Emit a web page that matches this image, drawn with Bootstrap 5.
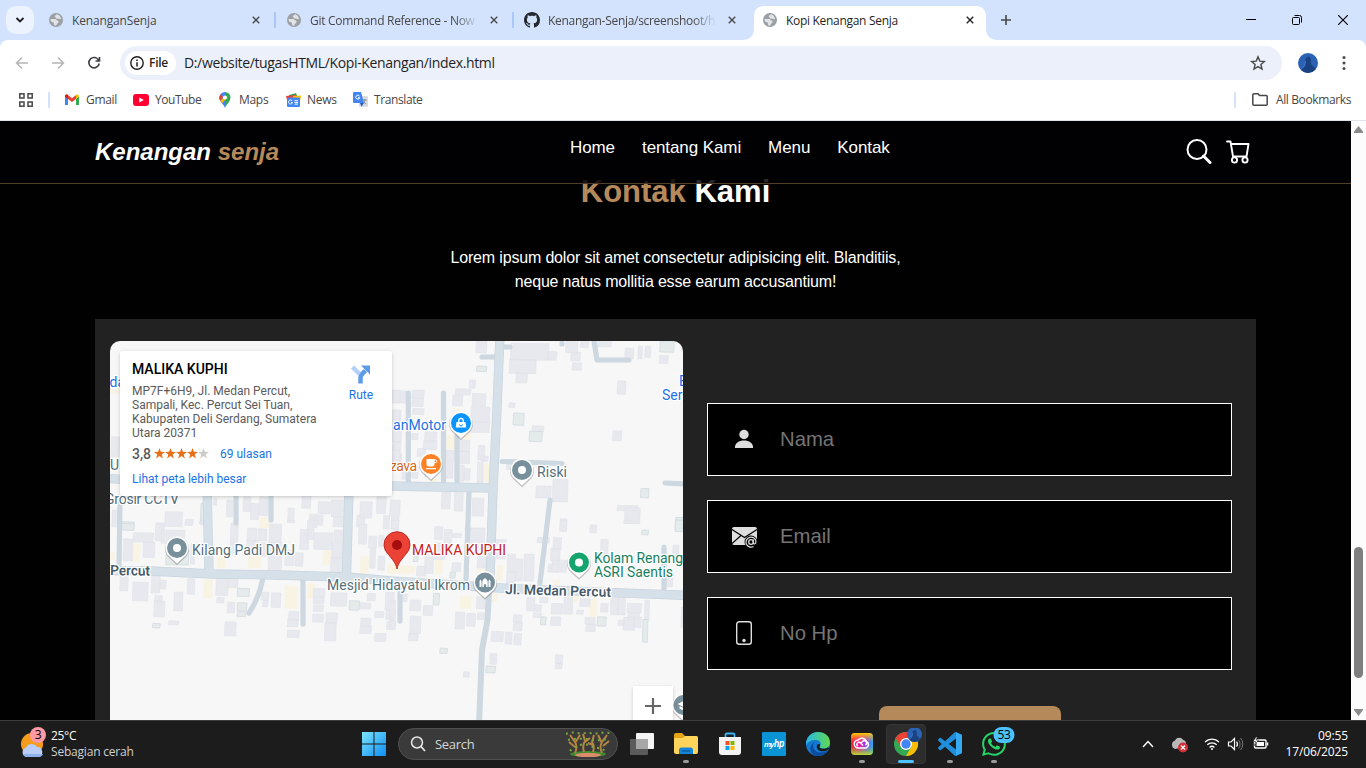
<!DOCTYPE html>
<html lang="id">
<head>
<meta charset="utf-8">
<meta name="viewport" content="width=device-width, initial-scale=1">
<title>Kopi Kenangan Senja</title>
<link href="https://cdn.jsdelivr.net/npm/bootstrap@5.3.0/dist/css/bootstrap.min.css" rel="stylesheet">
<style>
html,body{height:768px;overflow:hidden}
body{font-family:"Open Sans","Noto Sans",sans-serif;font-size:12px;line-height:16px;letter-spacing:-.3px;color:#1f1f1f;background:#fff}
svg{display:block;flex:none}
/* browser chrome */
.tabstrip{height:40px;background:#d3e3fd;padding-left:6px}
.tab-search{width:28px;height:28px;border-radius:10px;background:#ecf2fe;margin-right:3px}
.btab{width:238px;height:40px;padding-left:12px;color:#474747;position:relative}
.btab .ttl{width:168px;margin-left:9px;padding-top:1px;white-space:nowrap;overflow:hidden;position:relative}
.btab .fade-end{-webkit-mask-image:linear-gradient(90deg,#000 145px,transparent 168px)}
.btab .cls{margin-left:10px}
.btab.sep::after{content:"";position:absolute;right:-1px;top:12px;width:2px;height:16px;background:#a8c7fa}
.btab.on{color:#1f1f1f}
.btab .shape{position:absolute;left:-9px;top:6px}
.btab.on>*:not(.shape){position:relative}
.toolbar-row{height:46px;border-radius:8px 8px 0 0;background:#fff}
.omnibox{width:1162px;height:34px;border-radius:17px;background:#ecf0fa;margin-left:18px;padding-left:5px}
.filechip{width:51px;height:24px;border-radius:12px;background:#fff;font-weight:600;letter-spacing:-.25px;gap:5px;padding-left:5px}
.url{font-size:14px;letter-spacing:-.36px;margin-left:8px}
.bm-row{height:35px;color:#474747;border-bottom:1px solid #dfe3e8;padding-bottom:7px}
.bm-row .bm{gap:6px}
.vsep{width:2px;height:16px;background:#d3e3fd}
/* page */
.viewport{height:599px}
.site{width:1351px;background:#010101;position:relative;overflow:hidden;font-family:"Liberation Sans",Arial,sans-serif;letter-spacing:0;color:#fff}
.site-nav{position:absolute;inset:0 0 auto 0;height:63px;background:rgba(1,1,3,.85);border-bottom:1px solid #513d29;padding:0 95px}
.brand{font-size:24px;font-weight:700;font-style:italic;line-height:28px;width:475px;margin-top:-1px}
.coffee{color:#b6895b}
.site-nav .links{gap:27px;font-size:17px;letter-spacing:-.09px;line-height:20px;margin-top:-9px}
.head{font-size:31px;font-weight:700;line-height:36px;padding-top:53px;margin:0;text-align:center}
.lead-txt{font-size:16px;letter-spacing:-.17px;line-height:24px;margin:36px auto 0;width:480px;text-align:center}
.panel{margin:25px 95px 0;height:401px;background:#222;padding:22px 24px 0 15px;gap:24px}
.map-box{width:573px;height:379px;border-radius:10px 10px 0 0;overflow:hidden;position:relative;background:#f7f7f7;font-family:Roboto,sans-serif}
.place{position:absolute;left:10px;top:10px;width:272px;height:145px;background:#fff;border-radius:2px;box-shadow:0 1px 4px -1px rgba(0,0,0,.3);padding:10px 12px;color:#5b5b5b;font-size:12px;line-height:14px}
.place .nm{font-size:14px;font-weight:500;color:#000;line-height:16px;margin-bottom:7px}
.place .lnk{color:#1a73e8}
.zoombtn{position:absolute;left:523px;top:345px;width:40px;height:40px;background:#fff;box-shadow:0 1px 4px -1px rgba(0,0,0,.3)}
.fld{height:73px;border:1px solid #fff;background:#000;color:#757575;font-size:20.3px;margin-bottom:24px;padding:0 0 2px 24px;gap:24px}
.fld svg{margin-top:1px}
.send{width:182px;height:40px;border-radius:8px;background:#b6895b;margin:36px auto 0}
.sbar{width:15px;background:#fcfcfc;padding:8px 0 4px}
.thumb{width:9px;height:131px;border-radius:5px;background:#7f7f7f;margin-top:409px}
/* taskbar */
.taskbar{height:48px;background:#1c1c1c;border-top:1px solid #3c3c3c;color:#fff;padding-bottom:1px}
.taskbar .slot{width:44px;height:47px;position:relative}
.slot .run{position:absolute;left:19px;top:39px;width:6px;height:3px;border-radius:2px;background:#9a9a9a}
.slot .run.act{left:14px;width:16px;background:#4cc2ff}
.pill{width:220px;height:32px;border-radius:16px;background:#3a3a3a;border:1px solid #505050;margin-left:12px;padding-left:11px}
.tile{position:absolute;left:2px;top:3px;width:40px;height:40px;border-radius:4px;background:#2d2d2d;border:1px solid #353535}
.slot svg{position:relative}
</style>
</head>
<body class="d-flex flex-column">
<svg width="0" height="0" class="position-absolute">
 <symbol id="globe" viewBox="0 0 14 14"><circle cx="7" cy="7" r="7" fill="#9aa0a6"/><path d="M8.200 1.200c-1 .9-2.500.9-2.500 2.200 0 1 1.600.7 1.600 1.800 0 .8-1.100.8-1.900.8H1.700c-.5 1.500.3 2.700 1.300 2.900 1.100.2 1.800.2 1.900 1.400.1.900.1 1.900.9 2.300 2 .5 1.800-1.100 2.300-1.900.6-.8 1.500-.8 1.500-2 0-1.500-1.600-1-2.300-1.700-.5-.7.200-1.400 1.100-1.400.9 0 1.300.7 2.200.7.900 0 1.300-.4 1.400-.6-.3-2-1.600-3.700-3.800-4.500z" fill="#fff" opacity=".7"/></symbol>
 <symbol id="x" viewBox="0 0 14 14"><path d="M3.200 3.200l7.600 7.600M10.800 3.200l-7.600 7.600" stroke="currentColor" stroke-width="1.600" fill="none"/></symbol>
 <symbol id="face" viewBox="0 0 20 20"><circle cx="10" cy="10" r="10" fill="#2c62b4"/><path d="M3.500 17.500c.5-3 3-3 3.500-5 .4-2-.6-4 .5-6.500C8.500 3.800 11.500 3 12.500 5c.8 2 0 4 .5 6 1 2 4 3 4.500 5.500a10 10 0 0 1-14 1z" fill="#1b4280"/><path d="M7.500 8c0 4-2 6-3 7" stroke="#3f7bd6" fill="none"/></symbol>
</svg>

<div class="tabstrip d-flex align-items-center">
 <div class="tab-search d-flex align-items-center justify-content-center"><svg width="10" height="8" viewBox="0 0 10 8"><path d="M1.500 2L5 5.500 8.500 2" fill="none" stroke="#1f1f1f" stroke-width="1.800"/></svg></div>
 <div class="btab sep d-flex align-items-center"><svg width="14" height="14"><use href="#globe"/></svg><span class="ttl" style="letter-spacing:-.15px">KenanganSenja</span><svg class="cls" width="12" height="12"><use href="#x"/></svg></div>
 <div class="btab sep d-flex align-items-center"><svg width="14" height="14"><use href="#globe"/></svg><span class="ttl fade-end">Git Command Reference - Now</span><svg class="cls" width="12" height="12"><use href="#x"/></svg></div>
 <div class="btab d-flex align-items-center"><svg width="16" height="16" viewBox="0 0 16 16" style="margin:0 -1px"><path fill="#24292f" d="M8 0C3.580 0 0 3.580 0 8c0 3.540 2.290 6.530 5.470 7.590.4.070.55-.17.55-.38 0-.19-.01-.82-.01-1.490-2.010.37-2.530-.49-2.690-.94-.09-.23-.48-.94-.82-1.130-.28-.15-.68-.52-.01-.53.63-.01 1.080.58 1.230.82.72 1.210 1.870.87 2.330.66.070-.52.28-.87.51-1.070-1.780-.2-3.640-.89-3.640-3.950 0-.87.31-1.590.82-2.150-.08-.2-.36-1.020.080-2.120 0 0 .67-.21 2.200.82.64-.18 1.320-.27 2-.27.68 0 1.360.090 2 .27 1.530-1.040 2.200-.82 2.200-.82.44 1.100.16 1.920.080 2.120.51.56.82 1.270.82 2.150 0 3.070-1.870 3.750-3.650 3.950.29.25.54.73.54 1.480 0 1.070-.01 1.930-.01 2.200 0 .21.15.46.55.38A8.012 8.012 0 0 0 16 8c0-4.420-3.580-8-8-8z"/></svg><span class="ttl fade-end">Kenangan-Senja/screenshoot/h</span><svg class="cls" width="12" height="12"><use href="#x"/></svg></div>
 <div class="btab on d-flex align-items-center"><svg class="shape" width="256" height="34" viewBox="0 0 256 34"><path d="M0 34c8 0 12-4 12-12V10C12 4 16 0 22 0h212c6 0 10 4 10 10v12c0 8 4 12 12 12z" fill="#fff"/></svg><svg width="14" height="14"><use href="#globe"/></svg><span class="ttl">Kopi Kenangan Senja</span><svg class="cls" width="12" height="12"><use href="#x"/></svg></div>
 <svg width="12" height="12" viewBox="0 0 12 12" style="margin-left:11px"><path d="M6 1v10M1 6h10" stroke="#474747" stroke-width="1.600"/></svg>
 <div class="d-flex align-items-center ms-auto" style="gap:36px;margin-right:18px">
  <svg width="10" height="10"><path d="M0 4.500h10" stroke="#000"/></svg>
  <svg width="10" height="10" viewBox="0 0 10 10" fill="none" stroke="#000"><rect x=".5" y="2.500" width="7" height="7" rx="1"/><path d="M2.500 .5h5a2 2 0 0 1 2 2V7.500"/></svg>
  <svg width="10" height="10"><path d="M0 0l10 10M10 0L0 10" stroke="#000" stroke-width="1.100"/></svg>
 </div>
</div>

<div style="background:#d3e3fd"><div class="toolbar-row d-flex align-items-center">
 <svg width="88" height="16" viewBox="0 0 88 16" style="margin-left:14px" fill="none" stroke-width="1.500"><path d="M14 8H2.500M8 2.500L2.500 8 8 13.500M38 8h11.500M44 2.500L49.500 8 44 13.500" stroke="#b4b5b7"/><path d="M84.800 5.500A5.200 5.200 0 1 0 85.200 8.500M85.500 2v4h-4" stroke="#3c3f43" stroke-width="1.600"/></svg>
 <div class="omnibox d-flex align-items-center">
  <div class="filechip d-flex align-items-center"><svg width="14" height="14" viewBox="0 0 14 14"><circle cx="7" cy="7" r="6.200" fill="none" stroke="#1f1f1f" stroke-width="1.400"/><path d="M7 6.200v4.200M7 3.500v1.500" stroke="#1f1f1f" stroke-width="1.500"/></svg>File</div>
  <span class="url">D:/website/tugasHTML/Kopi-Kenangan/index.html</span>
  <svg class="ms-auto me-3" width="16" height="16" viewBox="0 0 16 16"><path d="M8 1.800l1.800 4.300 4.600.4-3.500 3 1.100 4.500L8 11.600 4 14l1.100-4.500-3.500-3 4.600-.4z" fill="none" stroke="#474747" stroke-width="1.400"/></svg>
 </div>
 <svg width="20" height="20" style="margin-left:16px"><use href="#face"/></svg>
 <svg width="4" height="16" viewBox="0 0 4 16" style="margin-left:24px" fill="#474747"><circle cx="2" cy="2.500" r="1.500"/><circle cx="2" cy="8" r="1.500"/><circle cx="2" cy="13.500" r="1.500"/></svg>
</div></div>

<div class="bm-row d-flex align-items-center">
 <svg width="14" height="14" viewBox="0 0 14 14" style="margin-left:19px" fill="none" stroke="#474747" stroke-width="1.500"><rect x=".8" y=".8" width="4.200" height="4.200"/><rect x="9" y=".8" width="4.200" height="4.200"/><rect x=".8" y="9" width="4.200" height="4.200"/><rect x="9" y="9" width="4.200" height="4.200"/></svg>
 <div class="vsep" style="margin-left:15px"></div>
 <div class="bm d-flex align-items-center" style="margin-left:14px;width:69px"><svg width="16" height="12" viewBox="0 0 16 12"><path d="M1 2v9h3V5z" fill="#4285f4"/><path d="M15 2v9h-3V5z" fill="#34a853"/><path d="M1 3V2C1 .5 2.500 0 3.600.8L8 4.300 12.400.8 12 5 8 8 4 5z" fill="#ea4335"/><path d="M1 2.500L4 5V1C2.500 0 1 .6 1 2.500z" fill="#c5221f"/><path d="M15 2.500L12 5V1c1.500-1 3-.4 3 1.500z" fill="#fbbc04"/></svg>Gmail</div>
 <div class="bm d-flex align-items-center" style="width:84px;letter-spacing:-.45px"><svg width="16" height="12" viewBox="0 0 16 12"><rect width="16" height="12" rx="3" fill="#f03"/><path d="M6.300 3.400v5.200L10.800 6z" fill="#fff"/></svg>YouTube</div>
 <div class="bm d-flex align-items-center" style="width:69px"><svg width="16" height="16" viewBox="0 0 16 16"><path d="M8 16C7 12.500 2.500 10 2.500 5.500A5.500 5.500 0 0 1 8 0z" fill="#4285f4"/><path d="M8 0a5.500 5.500 0 0 1 5.500 5.500C13.500 10 9 12.500 8 16z" fill="#34a853"/><path d="M3.300 9L7 5l2 2-4.200 4.500z" fill="#fbbc04"/><path d="M3.500 2.500l2.800 2.400L3 8.500A5 5 0 0 1 3.500 2.500z" fill="#ea4335"/><circle cx="8" cy="5.500" r="2.100" fill="#fff"/></svg>Maps</div>
 <div class="bm d-flex align-items-center" style="width:67px"><svg width="15" height="14" viewBox="0 0 15 14"><path d="M3 2l7-2 1.500 4H3z" fill="#34a853"/><path d="M0 3l9-1 1 5H1z" fill="#ea4335"/><path d="M7 3l8-.5-.5 4H7z" fill="#fbbc04"/><rect x="1" y="4.500" width="13" height="9.500" rx="1.200" fill="#4285f4"/><path d="M6.300 8A2 2 0 1 0 6.500 9.500H5M8.500 7.700h3.500M8.500 9.400h3.500M8.500 11.100h3.500" stroke="#fff" fill="none"/></svg>News</div>
 <div class="bm d-flex align-items-center" style="letter-spacing:-.4px"><svg width="15" height="15" viewBox="0 0 15 15"><rect x="6" y="4" width="9" height="11" rx="1" fill="#dadce0"/><path d="M1 0h7l3 11H1a1 1 0 0 1-1-1V1a1 1 0 0 1 1-1z" fill="#4285f4"/><path d="M7 11h4l-2.500 3.500z" fill="#1a56c4"/><path d="M6.500 4A2 2 0 1 0 6.800 5.700H5" stroke="#fff" fill="none"/><path d="M9.800 8h4M11.800 7v1c0 2-1 3.500-2 4M10.500 9.500c.5 1.200 1.500 2 2.800 2.700" stroke="#80868b" fill="none" stroke-width=".9"/></svg>Translate</div>
 <div class="vsep ms-auto"></div>
 <div class="d-flex align-items-center" style="margin-left:16px;gap:8px;margin-right:15px;letter-spacing:-.38px"><svg width="16" height="13" viewBox="0 0 16 13"><path d="M.8 10.700V2c0-.7.4-1.200 1.200-1.200h4L7.500 2.500h6.700c.6 0 1 .4 1 1v7.700c0 .6-.4 1-1 1H1.800c-.6 0-1-.5-1-1.500z" fill="none" stroke="#474747" stroke-width="1.500"/></svg>All Bookmarks</div>
</div>

<div class="viewport d-flex">
 <main class="site">
  <h2 class="head"><span class="coffee">Kontak</span> Kami</h2>
  <p class="lead-txt">Lorem ipsum dolor sit amet consectetur adipisicing elit. Blanditiis,<br>neque natus mollitia esse earum accusantium!</p>
  <section class="panel d-flex">
   <div class="map-box flex-shrink-0">
    <svg id="map" width="573" height="379" viewBox="110 341 573 379">
     <g id="blocks"></g>
     <g fill="none" stroke="#cdd8e1" stroke-linecap="round" stroke-linejoin="round">
      <g stroke-width="5.200"><path d="M443.500 393V484M408.300 393V484M457 436V485M469 492L466 580M550 500L540 583M482 357h14M504 347h6M562 343v1M594 341l3 19h32M502 461.500l60 2M665 483l20 1M236 490v33M271 490v30M262.500 580q-4 19-13.500 33M303 580v44M400 585v36M664 547v42M120 500l-1 68"/></g>
      <path d="M490 573L487.500 620 482 650 479 725" stroke-width="6"/>
     </g>
     <path d="M100 570.500L150 571 213 574 277 575 347 577 390 581 500 588 613 592.700 690 595.500M100 478L200 484 390 486 492 488M500 335L496.500 420 493 490 490 577M207 487l2 85M349 490l-2.500 85" stroke="#c8d4df" fill="none" stroke-linejoin="round" stroke-width="9.300"/>
     <path d="M100 570.500L150 571 213 574 277 575 347 577 390 581 500 588 613 592.700 690 595.500M100 478L200 484 390 486 492 488M500 335L496.500 420 493 490 490 577M207 487l2 85M349 490l-2.500 85" stroke="#d6e0e8" fill="none" stroke-width="8"/>
     <g id="pins"></g>
     <g font-family="Roboto,sans-serif" font-size="14" paint-order="stroke" stroke="#fff" stroke-width="2.500" stroke-linejoin="round" fill="#546e7a">
      <text x="109.500" y="387" fill="#1a73e8">da</text>
      <text x="110" y="470" fill="#546e7a">U</text>
      <text x="105" y="504" textLength="74">Grosir CCTV</text>
      <text x="393" y="430" textLength="53" fill="#1a73e8">anMotor</text>
      <text x="390" y="471" textLength="27" fill="#d56518">zava</text>
      <text x="537" y="477" textLength="30">Riski</text>
      <text x="679" y="386" fill="#1a73e8">B</text>
      <text x="662" y="400" fill="#1a73e8">Ser</text>
      <text x="192" y="555" textLength="103">Kilang Padi DMJ</text>
      <text x="327" y="590" textLength="143">Mesjid Hidayatul Ikrom</text>
      <text x="412" y="555" textLength="94" fill="#c5221f">MALIKA KUPHI</text>
      <text x="594" y="563" textLength="89" fill="#178060">Kolam Renang</text>
      <text x="594" y="577" textLength="79" fill="#178060">ASRI Saentis</text>
      <g font-weight="600" fill="#455a6b"><text x="110" y="575" textLength="40" transform="rotate(1 110 575)">Percut</text>
      <text x="505" y="594" textLength="106" transform="rotate(1.500 505 594)">Jl. Medan Percut</text></g>
     </g>
     <path d="M397 569c-1.500-7-5-9.500-8.500-14.500A13 13 0 1 1 405.500 554.500C402 559.500 398.500 562 397 569z" fill="#ea4335" stroke="#b31412" stroke-width=".8"/><circle cx="397" cy="545" r="5" fill="#a50e0e"/>
    </svg>
    <div class="place">
     <div class="nm">MALIKA KUPHI</div>
     <div>MP7F+6H9, Jl. Medan Percut,<br>Sampali, Kec. Percut Sei Tuan,<br>Kabupaten Deli Serdang, Sumatera<br>Utara 20371</div>
     <div class="d-flex align-items-center" style="margin-top:6px"><span style="font-size:14px;width:22px;font-weight:500">3,8</span>
      <svg width="56" height="11" viewBox="0 0 56 11"><defs><path id="st" d="M5.500 0l1.400 3.800 4.100.1-3.300 2.500 1.200 4L5.500 8.100 2.100 10.400l1.200-4L0 3.900l4.100-.1z"/></defs><g fill="#e7711b"><use href="#st"/><use href="#st" x="11"/><use href="#st" x="22"/><use href="#st" x="33"/></g><use href="#st" x="44" fill="#ccc"/></svg>
      <span class="lnk" style="margin-left:10px;padding-top:1px">69 ulasan</span></div>
     <div class="lnk" style="margin-top:11px">Lihat peta lebih besar</div>
     <div class="position-absolute lnk text-center" style="left:221px;top:14px;width:40px"><svg class="mx-auto" width="20" height="19" viewBox="0 0 20 19"><path d="M1.500 2l7.500 7.500" stroke="#b3d1f8" stroke-width="4.500"/><path d="M9.500 18.500V13c0-3 2-4.500 5-7.500" fill="none" stroke="#5c9be8" stroke-width="4.500"/><path d="M10 0.500h9v9z" fill="#5c9be8"/></svg><div style="margin-top:4px">Rute</div></div>
    </div>
    <div class="zoombtn d-flex align-items-center justify-content-center"><svg width="18" height="18"><path d="M9 1v16M1 9h16" stroke="#666" stroke-width="2.200"/></svg></div>
   </div>
   <form class="flex-grow-1" style="padding-top:62px">
    <div class="fld d-flex align-items-center"><svg width="24" height="24" viewBox="0 0 24 24" fill="#dedede"><circle cx="12" cy="7.500" r="4.700"/><path d="M3 21c-.5-5 4-7.500 9-7.500s9.500 2.500 9 7.500z"/></svg>Nama</div>
    <div class="fld d-flex align-items-center"><svg width="26" height="24" viewBox="0 0 26 24" style="margin-right:-2px"><rect y="3" width="25" height="18" rx="2" fill="#dedede"/><path d="M0 5.500l12.500 8L25 5.500M0 19.500L9 11.500M25 19l-8-7" stroke="#000" stroke-width="1.200" fill="none"/><circle cx="19" cy="18" r="6.500" fill="#000"/><circle cx="19" cy="18" r="2.300" fill="none" stroke="#dedede" stroke-width="1.300"/><path d="M21.300 15.500v3.200c0 2 2.700 1.500 2.700-1A5 5 0 1 0 21.500 22.500" fill="none" stroke="#dedede" stroke-width="1.200"/></svg>Email</div>
    <div class="fld d-flex align-items-center mb-0"><svg width="24" height="24" viewBox="0 0 24 24"><rect x="4.700" y=".7" width="14.600" height="22.600" rx="2.500" fill="none" stroke="#dedede" stroke-width="1.400"/><circle cx="12" cy="19.500" r="1.700" fill="#dedede"/></svg>No Hp</div>
    <div class="send"></div>
   </form>
  </section>
  <nav class="site-nav d-flex align-items-center">
   <div class="brand">Kenangan <span class="coffee">senja</span></div>
   <div class="links d-flex"><span>Home</span><span>tentang Kami</span><span>Menu</span><span>Kontak</span></div>
   <div class="ms-auto d-flex align-items-center" style="gap:14px;margin-right:5px;margin-top:-1px">
    <svg width="26" height="26" viewBox="0 0 26 26" fill="none" stroke="#fff"><circle cx="11" cy="10.500" r="9.500" stroke-width="2"/><path d="M17.500 17l6.500 6.500" stroke-width="3" stroke-linecap="round"/></svg>
    <svg width="25" height="25" viewBox="0 0 25 25" fill="none" stroke="#fff" stroke-width="1.900"><path d="M1 2.500h3.500L7 17.500h13.500L22.500 5H5" stroke-linejoin="round" stroke-linecap="round"/><circle cx="8.500" cy="21" r="2.600"/><circle cx="19" cy="21" r="2.600"/></svg>
   </div>
  </nav>
 </main>
 <div class="sbar d-flex flex-column align-items-center justify-content-between flex-shrink-0">
  <svg width="9" height="7" style="margin-top:-3px"><path d="M4.500 0L9 5.500V7H0V5.500z" fill="#8b8b8b"/></svg>
  <div class="thumb"></div>
  <svg width="9" height="7" style="margin-top:26px"><path d="M0 0h9v1L4.500 7 0 1z" fill="#8b8b8b"/></svg>
 </div>
</div>

<footer class="taskbar d-flex align-items-center">
 <svg width="28" height="34" viewBox="0 0 28 34" style="margin:-3px 0 0 20px"><circle cx="12" cy="18" r="11" fill="#f59c1c"/><path d="M6 31a5 5 0 0 1 0-9.500C8 17 15 17 17 21c5-1 8 8 2 10z" fill="#b9cdf6"/><path d="M6 31a5 5 0 0 1-3-3h20c-1 2-2 3-4 3z" fill="#8fb2ee"/><circle cx="18" cy="9" r="8" fill="#ff99a4"/><text x="18" y="13.300" text-anchor="middle" font-size="12" font-family="Open Sans">3</text></svg>
 <div style="margin-left:3px;line-height:16px;width:309px">25°C<br><span style="color:#d0d0d0;letter-spacing:-.2px">Sebagian cerah</span></div>
 <svg width="24" height="24" viewBox="0 0 24 24" style="margin-left:2px"><defs><linearGradient id="w" x2="1" y2="1"><stop stop-color="#7be5fd"/><stop offset="1" stop-color="#0f8df2"/></linearGradient></defs><path d="M0 0h11.500v11.500H0zM12.500 0H24v11.500H12.500zM0 12.500h11.500V24H0zM12.500 12.500H24V24H12.500z" fill="url(#w)"/></svg>
 <div class="pill d-flex align-items-center" style="color:#d6d6d6;font-size:13px"><svg width="16" height="16" viewBox="0 0 16 16"><circle cx="7" cy="6.500" r="5.500" fill="#4a4a4a" stroke="#e6e6e6" stroke-width="1.500"/><path d="M11 10.500l4 4.500" stroke="#e6e6e6" stroke-width="1.800"/></svg><span style="margin-left:9px">Search</span>
  <svg class="ms-auto" width="45" height="26" viewBox="0 0 45 26" style="margin-right:6px"><ellipse cx="22" cy="23" rx="18" ry="3" fill="#3f8a2c"/><ellipse cx="22" cy="24" rx="13" ry="2.200" fill="#d98d6a"/><g fill="none" stroke="#b58442" stroke-width="2"><path d="M9 22q3-6 0-11L4 4M9 12l5-8M9 16l-6-5M18 21q-2-6 1-11l-2-7M19 11l5-4M27 21q2-6-1-10l2-7M27 14l-5-2M36 22q-3-6 0-11l5-7M36 12l-4-8M37 15l6-5"/></g><g fill="none" stroke="#7ba83a" stroke-width="2" stroke-dasharray="2 4"><path d="M0 3q6-3 15 0 7-2 13 0 8-2 16-1M2 9q9-2 19-1 12 3 22-1M4 20q3-4 8-4M31 17q5 0 9 4M14 14q8-2 14 3"/></g></svg></div>
 <div class="d-flex" style="margin-left:2px">
  <div class="slot d-flex align-items-center justify-content-center"><svg width="24" height="24" viewBox="0 0 24 24"><rect x="6" y="1" width="18" height="16" rx="1" fill="#f4f4f4"/><rect y="7" width="18" height="16" rx="1" fill="#666" opacity=".85"/><rect x="6" y="7" width="12" height="10" fill="#a7a7a7"/></svg></div>
  <div class="slot d-flex align-items-center justify-content-center"><svg width="24" height="22" viewBox="0 0 24 22"><path d="M0 2q0-2 2-2h6l3 3h11q2 0 2 2v6H0z" fill="#e6a314"/><path d="M0 5h9l2-2h11q2 0 2 2v14q0 2-2 2H2q-2 0-2-2z" fill="#ffd45b"/><path d="M5 21v-4q0-2.500 2.500-2.500h9Q19 14.500 19 17v4z" fill="#1384d8"/><path d="M8 18h8" stroke="#0b5ea8" stroke-width="1.500"/></svg><i class="run"></i></div>
  <div class="slot d-flex align-items-center justify-content-center"><svg width="24" height="24" viewBox="0 0 24 24"><path d="M7.500 6V3q0-1.500 1.500-1.500h6q1.500 0 1.500 1.500v3" fill="none" stroke="#35b5f1" stroke-width="1.800"/><path d="M1 5h22v15q0 3-3 3H4q-3 0-3-3z" fill="#f3f3f3"/><path d="M7.500 9h4v4h-4z" fill="#f25022"/><path d="M12.500 9h4v4h-4z" fill="#7fba00"/><path d="M7.500 14h4v4h-4z" fill="#00a4ef"/><path d="M12.500 14h4v4h-4z" fill="#ffb900"/></svg></div>
  <div class="slot d-flex align-items-center justify-content-center"><svg width="24" height="24"><rect width="24" height="24" rx="1" fill="#0a94d6"/><text x="2" y="15" font-family="Liberation Sans" font-style="italic" font-weight="700" fill="#fff" font-size="8" textLength="10">my</text><text x="12" y="15" font-family="Liberation Sans" font-style="italic" font-weight="700" fill="#fff" font-size="11" textLength="10" lengthAdjust="spacingAndGlyphs">hp</text></svg></div>
  <div class="slot d-flex align-items-center justify-content-center"><svg width="24" height="24" viewBox="0 0 24 24"><defs><linearGradient id="e1" x2="1"><stop stop-color="#25b7e8"/><stop offset="1" stop-color="#62d94f"/></linearGradient></defs><circle cx="12" cy="12" r="12" fill="#1479d0"/><path d="M0 11C1 4 6 0 12 0c7 0 12 4.500 12 10.500 0 4-3 6-6.500 6-2.500 0-4-1-3.500-2.300 1.500-1.700 1-6-4-6.200C5 8 1.500 10 0 13z" fill="url(#e1)"/><path d="M9 10c-3.500 3-2 8.500 3 10 4 1.200 8 .3 10.500-2C20 22 16 24 12 24 6 24 3 18 5 14c1-2 2.500-3.500 4-4z" fill="#0b4c9e"/><path d="M13.500 12c1.300 2.500-.8 3 .5 4 2 1.200 6 .9 8-.8l1.500 1.300q-3 3-7.500 2.800c-4.500-.3-6.500-4-4.500-7z" fill="#1c1c1c"/></svg></div>
  <div class="slot d-flex align-items-center justify-content-center"><svg width="22" height="22" viewBox="0 0 22 22"><defs><linearGradient id="c1" x2="1" y2="0"><stop stop-color="#f22"/><stop offset=".35" stop-color="#f0a"/><stop offset=".7" stop-color="#84f"/><stop offset="1" stop-color="#2af"/></linearGradient><linearGradient id="c2" y1="0" x2="0" y2="1"><stop stop-color="#ffd000"/><stop offset=".45" stop-color="#f81" stop-opacity="0"/><stop offset=".6" stop-color="#6c3" stop-opacity=".1"/><stop offset="1" stop-color="#bd3"/></linearGradient></defs><rect width="22" height="22" rx="4" fill="url(#c1)"/><rect width="22" height="22" rx="4" fill="url(#c2)"/><path d="M7.500 15a4 4 0 0 1-.5-8 5 5 0 0 1 8.500 1.500A3.500 3.500 0 0 1 15 15zM12 12.500L9 9.500a2 2 0 1 0-2 3.500M10 10l2-2a2 2 0 1 1 2.500 4" fill="none" stroke="#fff" stroke-width="1.500"/></svg><i class="run"></i></div>
  <div class="slot d-flex align-items-center justify-content-center"><div class="tile"></div><svg width="32" height="32" viewBox="-4 -4 32 32"><circle cx="12" cy="12" r="12" fill="#34a853"/><path d="M12 12V6h10.400A12 12 0 0 1 12 24l5.200-9z" fill="#fbbc04"/><path d="M1.600 6l5.200 9L12 12V6h10.400A12 12 0 0 0 1.600 6z" fill="#ea4335"/><circle cx="12" cy="12" r="6" fill="#fff"/><circle cx="12" cy="12" r="4.700" fill="#4285f4"/><svg x="13" y="-5" width="15" height="15" overflow="visible"><use href="#face" width="15" height="15"/></svg></svg><i class="run act"></i></div>
  <div class="slot d-flex align-items-center justify-content-center"><svg width="24" height="24" viewBox="0 0 24 24"><path fill="#1f8fdc" d="M23.150 2.587L18.210.21a1.494 1.494 0 0 0-1.705.29l-9.460 8.630-4.120-3.128a.999.999 0 0 0-1.276.057L.327 7.261A1 1 0 0 0 .326 8.740L3.899 12 .326 15.260a1 1 0 0 0 .001 1.479L1.650 17.940a.999.999 0 0 0 1.276.057l4.120-3.128 9.460 8.630a1.492 1.492 0 0 0 1.704.29l4.942-2.377A1.500 1.500 0 0 0 24 20.060V3.939a1.500 1.500 0 0 0-.85-1.352zm-5.146 14.861L10.826 12l7.178-5.448v10.896z"/><path d="M18 .2l5.150 2.387A1.500 1.500 0 0 1 24 3.940V20.060a1.500 1.500 0 0 1-.85 1.350L18 23.800z" fill="#35a9f2"/></svg><i class="run"></i></div>
  <div class="slot d-flex align-items-center justify-content-center"><svg width="44" height="40" viewBox="0 0 44 40"><g transform="translate(10 8) scale(1.500)"><path fill="#25d366" d="M13.601 2.326A7.854 7.854 0 0 0 7.994 0C3.627 0 .068 3.558.064 7.926c0 1.399.366 2.760 1.057 3.965L0 16l4.204-1.102a7.933 7.933 0 0 0 3.790.965h.004c4.368 0 7.926-3.558 7.930-7.930A7.898 7.898 0 0 0 13.600 2.326zM7.994 14.521a6.573 6.573 0 0 1-3.356-.92l-.24-.144-2.494.654.666-2.433-.156-.251a6.560 6.560 0 0 1-1.007-3.505c0-3.626 2.957-6.584 6.591-6.584a6.560 6.560 0 0 1 4.660 1.931 6.557 6.557 0 0 1 1.928 4.660c-.004 3.639-2.961 6.592-6.592 6.592zm3.615-4.934c-.197-.099-1.170-.578-1.353-.646-.182-.065-.315-.099-.445.099-.133.197-.513.646-.627.775-.114.133-.232.148-.43.050-.197-.1-.836-.308-1.592-.985-.59-.525-.985-1.175-1.103-1.372-.114-.198-.011-.304.088-.403.087-.088.197-.232.296-.346.1-.114.133-.198.198-.33.065-.134.034-.248-.015-.347-.05-.099-.445-1.076-.612-1.470-.16-.389-.323-.335-.445-.34-.114-.007-.247-.007-.38-.007a.729.729 0 0 0-.529.247c-.182.198-.691.677-.691 1.654 0 .977.71 1.916.81 2.049.098.133 1.394 2.132 3.383 2.992.47.205.84.326 1.129.418.475.152.904.129 1.246.080.38-.058 1.171-.48 1.338-.943.164-.464.164-.86.114-.943-.049-.084-.182-.133-.38-.232z"/></g><rect x="21.500" y="3" width="21" height="16" rx="8" fill="#4cc2ff"/><text x="32" y="15.300" text-anchor="middle" font-size="12" font-family="Open Sans" letter-spacing="-.3">53</text></svg><i class="run"></i></div>
 </div>
 <svg width="130" height="20" viewBox="1140 734 130 20" style="margin-left:124px" fill="none" stroke="#fff" stroke-width="1.400"><path d="M1143 747l5-5.500 5 5.500"/><path d="M1175 749a4.500 4.500 0 0 1 0-8.500c2-4 7-3 8-.5 3 0 4 4 2 7z" fill="#b9b9b9" stroke="none"/><circle cx="1183" cy="747.500" r="5" fill="#d13438" stroke="none"/><path d="M1181 745.500l4 4M1185 745.500l-4 4" stroke-width="1.200"/><path d="M1205 742a10 10 0 0 1 14 0M1207.300 744.800a6.800 6.800 0 0 1 9.400 0M1209.600 747.400a3.500 3.500 0 0 1 4.800 0"/><circle cx="1212" cy="749" r="1" fill="#fff" stroke="none"/><path d="M1228.500 742h2.500l3.500-3.500v11L1231 746h-2.500zM1236.500 741.500a4 4 0 0 1 0 5" stroke-width="1.200"/><path d="M1238.500 740a6.500 6.500 0 0 1 0 8.500M1240.500 738a9 9 0 0 1 0 12" stroke="#777" stroke-width="1"/><rect x="1254.500" y="740" width="11.500" height="8" rx="1"/><path d="M1256.500 742h7.500v4h-7.500z" fill="#fff" stroke="none"/><path d="M1267.500 742.500v3" stroke-width="1.500"/><path d="M1256 737l-3 4.500h2.500l-1 4 4-5.500h-2.500l1.500-3z" fill="#fff" stroke="#1c1c1c" stroke-width=".6"/></svg>
 <div class="ms-auto text-end" style="margin-right:18px;line-height:16px;letter-spacing:-.12px">09:55<br>17/06/2025</div>
</footer>

<script src="https://cdn.jsdelivr.net/npm/bootstrap@5.3.0/dist/js/bootstrap.bundle.min.js"></script>
<script>
/* building footprints, one sheet per map quadrant: origin, then plain / outlined / commercial blocks (thirds of a pixel) */
const sheets=[
{o:[390,330],
g:[[258,34,32,34],[362,40,114,50],[358,88,80,42],[472,64,28,26],[378,128,34,30],[527,34,36,34],[543,66,28,26],[547,98,28,22],[572,34,24,18],[622,34,42,16],[705,54,26,32],[744,48,13,38],[765,48,17,34],[808,76,26,24],[682,152,25,40],[668,302,27,30],[357,218,18,14],[426,287,35,18],[238,150,18,24],[8,182,42,36],[66,180,36,24],[66,205,34,24],[68,235,34,18],[8,240,24,40],[8,285,26,50],[8,335,24,28],[8,370,26,50],[60,310,24,18],[104,305,36,28],[100,332,40,26],[82,355,24,24],[196,176,46,18],[188,195,30,32],[247,190,40,38],[243,230,56,45],[240,275,58,32],[207,330,32,34],[205,364,34,36],[168,360,26,30],[165,392,24,52],[204,405,18,48],[222,415,18,35],[264,346,20,44],[262,396,17,70],[274,378,20,16],[36,405,14,42],[60,408,24,36],[105,400,20,40],[155,486,26,50],[193,487,26,56],[247,504,34,54],[4,560,22,40],[225,594,60,6],[134,590,24,10],[438,468,45,35],[488,448,45,67],[350,390,16,28],[510,566,20,34],[704,532,46,48],[682,526,60,16]],
t:[[370,249,32,36],[418,304,38,30],[856,562,26,38],[810,34,42,32],[260,108,30,16],[752,475,24,28]],
y:[[170,315,26,42],[220,300,22,28],[280,400,20,56],[118,445,24,20],[188,235,22,38]]},
{o:[100,330],
g:[[195,545,52,44],[168,578,24,22],[255,568,24,18],[34,320,24,60],[340,505,10,20],[380,510,18,50],[430,500,22,44],[452,520,24,48],[478,500,26,56],[564,534,18,40],[606,498,26,36],[628,552,24,40],[655,515,36,36],[645,555,24,30],[694,510,42,50],[700,560,36,30],[780,515,36,48],[830,500,28,50],[870,510,30,48],[770,555,24,36],[850,556,18,40],[876,180,24,38],[878,240,22,46],[878,360,22,50],[36,540,20,50]],
t:[[302,520,22,62],[64,575,38,24]],y:[[478,560,22,34],[30,178,30,12]]},
{o:[100,520],
g:[[100,38,60,28],[130,66,34,46],[70,56,28,66],[166,12,26,50],[184,30,70,40],[272,70,12,62],[392,10,22,58],[390,68,24,34],[442,24,28,38],[474,26,26,36],[508,12,36,55],[440,62,34,44],[480,68,24,40],[505,65,40,85],[555,90,26,46],[585,98,24,40],[600,28,26,60],[622,0,20,58],[642,38,56,50],[702,30,34,36],[695,68,34,48],[692,112,36,44],[776,12,24,60],[806,48,24,36],[836,46,16,34],[810,84,16,60],[834,108,20,42],[860,60,20,44],[874,0,22,26],[562,0,22,8],[60,168,24,44],[98,186,46,56],[154,168,26,50],[180,180,18,26],[164,226,22,20],[162,242,32,48],[222,216,26,56],[262,176,22,46],[348,172,36,54],[350,232,22,16],[386,174,28,28],[382,246,22,32],[374,305,34,42],[484,216,22,24],[488,240,16,20],[514,218,28,44],[566,274,30,26],[562,298,32,22],[562,330,36,22],[640,205,34,24],[640,230,32,20],[640,254,30,20],[638,282,32,24],[678,278,34,30],[674,308,34,54],[692,218,48,40],[780,248,32,18],[802,220,24,22],[782,294,30,24],[780,318,34,22],[824,340,34,24],[824,274,28,18],[856,216,26,54],[858,270,28,28],[860,304,26,24],[206,302,30,12]],
t:[[198,90,68,44],[412,205,36,24],[412,248,28,24],[412,275,26,14],[748,242,30,28],[60,10,42,20],[300,0,22,12],[158,310,22,13]],
y:[[98,70,22,56],[30,95,14,24],[310,178,28,56],[350,110,26,34],[444,105,40,38],[554,196,38,70],[668,92,24,42],[780,108,26,58],[480,0,30,24],[380,172,14,36],[622,190,22,46],[862,130,38,30]]},
{o:[390,520],
g:[[134,20,24,38],[162,28,24,42],[188,40,26,12],[240,24,44,44],[132,68,34,50],[80,138,28,30],[104,110,26,50],[186,128,26,26],[262,108,28,36],[310,58,38,14],[320,86,26,30],[352,102,24,52],[378,116,20,66],[402,102,30,80],[350,155,26,36],[442,52,36,16],[490,52,24,36],[482,84,28,38],[475,132,30,24],[486,120,44,36],[510,0,20,34],[600,14,20,24],[632,58,22,50],[702,0,44,10],[60,240,32,32],[100,256,28,30],[36,222,16,22],[60,288,32,52],[56,340,28,22],[0,240,16,60],[0,300,16,28],[260,230,28,36],[196,276,28,50],[230,280,26,38],[262,278,26,20],[304,334,36,30],[346,336,20,36],[370,284,26,22],[370,306,26,26],[372,340,22,34],[410,232,24,40],[434,254,20,20],[430,278,24,14],[450,232,24,16],[484,250,34,32],[482,290,30,26],[522,216,26,66],[560,270,20,12],[585,292,30,20],[588,312,28,22],[632,250,22,26],[662,228,22,56],[684,230,22,54],[712,250,42,28],[714,278,34,20],[700,292,34,38],[730,290,24,32],[684,300,20,16],[764,240,14,60],[496,404,22,26],[496,430,20,16],[300,400,20,16],[300,416,20,16],[220,455,18,16],[874,262,8,60],[570,235,30,24],[830,150,18,50],[848,75,18,50]],
t:[[288,438,28,20],[150,384,22,16],[452,290,16,24],[758,298,15,68],[130,220,18,34],[180,156,16,18],[70,108,14,16],[755,30,20,14],[856,0,24,34],[622,290,26,28]],
y:[[134,118,24,44],[0,136,74,24],[210,228,34,38],[320,135,18,48],[308,220,14,26],[260,146,30,16],[490,178,20,16],[552,200,14,46],[600,236,22,54]]}];
const box=a=>a.map(([x,y,w,h])=>`M${x+1} ${y}l${w} 1-2 ${h}-${w}-1z`).join('');
document.getElementById('blocks').innerHTML=sheets.map(s=>`<g transform="translate(${s.o}) scale(.33333)"><path d="${box(s.y)}" fill="#f9f3e4"/><path d="${box(s.g)}" fill="#e8e9ee" stroke="#dfe1e8" stroke-width="1.500"/><path d="${box(s.t)}" fill="#e5eaeb" stroke="#d0dae1" stroke-width="2.200"/></g>`).join('');
/* place pins: x, y, colour, glyph */
const dot='<circle r="4" fill="#fff"/>';
const pins=[[461,423,'#0a94ff','<path d="M-4.500-1h9l.8 5.500h-10.600z" fill="#fff"/><path d="M-2.200-1v-1.500a2.200 2.200 0 0 1 4.400 0V-1" fill="none" stroke="#fff" stroke-width="1.300"/><path d="M-1.500 1.500a1.500 1.500 0 0 0 3 0" fill="none" stroke="#0a94ff"/>'],
[431,464,'#ff8126','<path d="M-4.500-5h8v5q0 2.500-2.500 2.500h-3Q-4.500 2.500-4.500 0z" fill="#fff"/><path d="M3-4h1.800q1 0 1 1.200T4.800-1.400H3" fill="none" stroke="#fff"/><path d="M-5 4.700H5" stroke="#fff" stroke-width="1.300"/>'],
[522,470,'#78909c',dot],[177,548,'#78909c',dot],
[485,582.5,'#78909c','<path d="M-5.500 4.500v-6l1-1.500 1 1.500v6zM3.500 4.500v-6l1-1.500 1 1.500v6zM-2.700 4.500V-1Q-2.500-3 0-4.500 2.500-3 2.700-1v5.500H1.200V2.500q-1.200-2-2.400 0v2z" fill="#fff"/>'],
[579,562.5,'#15a46e',dot],[683.5,705,'#78909c','<path d="M-6-1L0-4 6-1 0 2zM-4 1v2.500L0 5.500 4 3.500V1L0 3z" fill="#fff"/>']];
document.getElementById('pins').innerHTML=pins.map(([x,y,c,g])=>`<g transform="translate(${x} ${y})"><path d="M0 16.500L-7.500 9.500A12 12 0 1 1 7.500 9.500z" fill="#000" opacity=".22" transform="translate(0 .8)"/><path d="M0 15.500L-7 9A11.500 11.500 0 1 1 7 9z" fill="#fff"/><circle r="10" fill="${c}"/>${g}</g>`).join('');
</script>
</body>
</html>
